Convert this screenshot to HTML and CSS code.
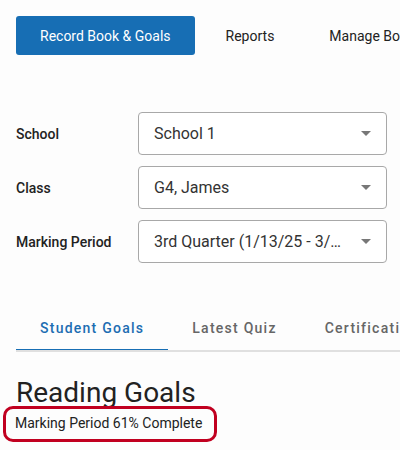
FILE: index.html
```html
<!DOCTYPE html>
<html lang="en">
<head>
<meta charset="utf-8">
<title>Record Book & Goals</title>
<link rel="stylesheet" href="styles.css">
</head>
<body>
<div class="page">
  <nav class="topnav">
    <a class="nav-item active">Record Book &amp; Goals</a>
    <a class="nav-item">Reports</a>
    <a class="nav-item">Manage Books</a>
  </nav>

  <form class="filters">
    <div class="row">
      <label class="label">School</label>
      <div class="select"><span class="value">School 1</span><span class="arrow"></span></div>
    </div>
    <div class="row">
      <label class="label">Class</label>
      <div class="select"><span class="value">G4, James</span><span class="arrow"></span></div>
    </div>
    <div class="row">
      <label class="label">Marking Period</label>
      <div class="select"><span class="value">3rd Quarter (1/13/25 - 3/14/25)</span><span class="arrow"></span></div>
    </div>
  </form>

  <div class="tabs">
    <div class="tab active">Student Goals</div>
    <div class="tab">Latest Quiz</div>
    <div class="tab">Certifications</div>
  </div>

  <h1 class="title">Reading Goals</h1>
  <div class="progress-wrap">
    <span class="progress">Marking Period 61% Complete</span>
  </div>
</div>
</body>
</html>
```

FILE: styles.css
```css
* { box-sizing: border-box; }
html, body { margin: 0; padding: 0; }
body {
  background: #fdfdfd;
  font-family: Roboto, "Liberation Sans", sans-serif;
  color: #222;
  width: 400px;
  height: 450px;
  overflow: hidden;
}
.page { padding: 16px 0 0 16px; width: 400px; overflow: hidden; }

.topnav { display: flex; gap: 7px; align-items: center; white-space: nowrap; }
.nav-item {
  flex: none;
  display: flex; align-items: center;
  height: 39px;
  padding: 0 24px;
  font-size: 14px;
  color: #222;
  border-radius: 3px;
}
.nav-item.active { background: #176eb4; color: #fff; }

.filters { display: flex; flex-direction: column; gap: 11px; margin-top: 57px; }
.row { display: flex; align-items: center; }
.label { width: 122px; font-size: 14px; font-weight: 500; color: #222; }
.select {
  width: 249px; height: 43px;
  border: 1px solid #a8a8a8;
  border-radius: 4px;
  background: #fff;
  display: flex; align-items: center;
  padding: 0 15px 0 15px;
  font-size: 16px; color: #333;
}
.value { flex: 1; min-width: 0; overflow: hidden; white-space: nowrap; text-overflow: ellipsis; }
.arrow {
  flex: none;
  margin-left: 16px;
  width: 0; height: 0;
  border-left: 5px solid transparent;
  border-right: 5px solid transparent;
  border-top: 5px solid #777;
}

.tabs {
  display: flex;
  margin-top: 44px;
  border-bottom: 2px solid #e0e0e0;
  white-space: nowrap;
  overflow: hidden;
}
.tab {
  flex: none;
  padding: 0 24px;
  height: 45px;
  display: flex; align-items: center;
  font-size: 14px; font-weight: 500;
  letter-spacing: 1.25px;
  color: #666;
  margin-bottom: -2px;
  border-bottom: 3px solid transparent;
}
.tab.active { color: #1c6db2; border-bottom-color: #176eb4; }

.title {
  margin: 25px 0 0 0;
  font-size: 28px; font-weight: 400;
  line-height: 32px;
  color: #222;
}
.progress-wrap { margin: -3px 0 0 -13px; }
.progress {
  display: inline-block;
  border: 3px solid #c10020;
  border-radius: 10px;
  padding: 5px 12px 7px 9px;
  font-size: 14px;
  line-height: 18px;
  color: #222;
}
```
